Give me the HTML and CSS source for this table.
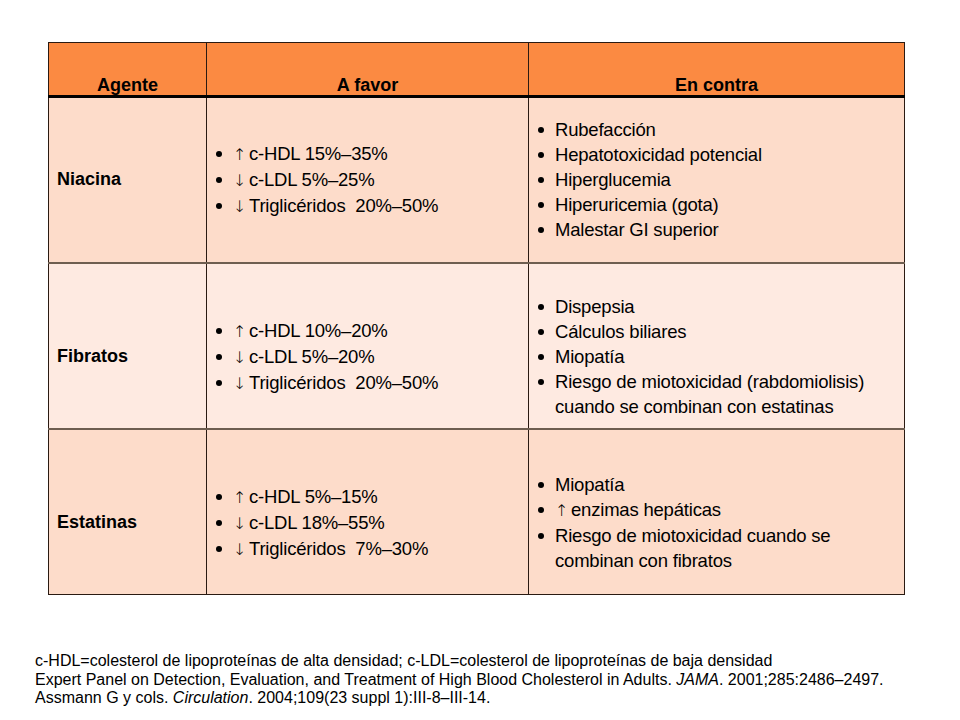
FILE: index.html
```html
<!DOCTYPE html>
<html lang="es">
<head>
<meta charset="utf-8">
<title>Agentes hipolipemiantes</title>
<link rel="stylesheet" href="styles.css">
</head>
<body>
<div class="page">
  <table class="grid">
    <colgroup>
      <col class="c1"><col class="c2"><col class="c3">
    </colgroup>
    <thead>
      <tr>
        <th>Agente</th>
        <th>A favor</th>
        <th>En contra</th>
      </tr>
    </thead>
    <tbody>
      <tr class="row odd first">
        <td class="agent">Niacina</td>
        <td>
          <ul class="list">
            <li><span class="b"></span><span><span class="arr">↑</span>c-HDL 15%–35%</span></li>
            <li><span class="b"></span><span><span class="arr">↓</span>c-LDL 5%–25%</span></li>
            <li><span class="b"></span><span><span class="arr">↓</span>Triglicéridos&nbsp; 20%–50%</span></li>
          </ul>
        </td>
        <td>
          <ul class="list">
            <li><span class="b"></span><span>Rubefacción</span></li>
            <li><span class="b"></span><span>Hepatotoxicidad potencial</span></li>
            <li><span class="b"></span><span>Hiperglucemia</span></li>
            <li><span class="b"></span><span>Hiperuricemia (gota)</span></li>
            <li><span class="b"></span><span>Malestar GI superior</span></li>
          </ul>
        </td>
      </tr>
      <tr class="row even">
        <td class="agent">Fibratos</td>
        <td>
          <ul class="list">
            <li><span class="b"></span><span><span class="arr">↑</span>c-HDL 10%–20%</span></li>
            <li><span class="b"></span><span><span class="arr">↓</span>c-LDL 5%–20%</span></li>
            <li><span class="b"></span><span><span class="arr">↓</span>Triglicéridos&nbsp; 20%–50%</span></li>
          </ul>
        </td>
        <td>
          <ul class="list">
            <li><span class="b"></span><span>Dispepsia</span></li>
            <li><span class="b"></span><span>Cálculos biliares</span></li>
            <li><span class="b"></span><span>Miopatía</span></li>
            <li><span class="b"></span><span>Riesgo de miotoxicidad (rabdomiolisis) cuando se combinan con estatinas</span></li>
          </ul>
        </td>
      </tr>
      <tr class="row odd">
        <td class="agent">Estatinas</td>
        <td>
          <ul class="list">
            <li><span class="b"></span><span><span class="arr">↑</span>c-HDL 5%–15%</span></li>
            <li><span class="b"></span><span><span class="arr">↓</span>c-LDL 18%–55%</span></li>
            <li><span class="b"></span><span><span class="arr">↓</span>Triglicéridos&nbsp; 7%–30%</span></li>
          </ul>
        </td>
        <td>
          <ul class="list">
            <li><span class="b"></span><span>Miopatía</span></li>
            <li><span class="b"></span><span><span class="arr">↑</span>enzimas hepáticas</span></li>
            <li><span class="b"></span><span>Riesgo de miotoxicidad cuando se combinan con fibratos</span></li>
          </ul>
        </td>
      </tr>
    </tbody>
  </table>

  <div class="notes">
    <p>c-HDL=colesterol de lipoproteínas de alta densidad; c-LDL=colesterol de lipoproteínas de baja densidad</p>
    <p>Expert Panel on Detection, Evaluation, and Treatment of High Blood Cholesterol in Adults. <i>JAMA</i>. 2001;285:2486–2497.</p>
    <p>Assmann G y cols. <i>Circulation</i>. 2004;109(23 suppl 1):III-8–III-14.</p>
  </div>
</div>
</body>
</html>
```

FILE: styles.css
```css
html, body {
  margin: 0;
  padding: 0;
  background: #ffffff;
}

body {
  font-family: "Liberation Sans", Arial, sans-serif;
  color: #000000;
}

.page {
  width: 960px;
  height: 720px;
  padding-top: 42px;
  box-sizing: border-box;
}

.grid {
  margin-left: 48px;
  width: 856px;
  border-collapse: collapse;
  table-layout: fixed;
  border: 1px solid #2a1a12;
}

.c1 { width: 158px; }
.c2 { width: 322px; }
.c3 { width: 376px; }

.grid th {
  background: #fb8a42;
  height: 54px;
  padding: 0;
  box-sizing: border-box;
  vertical-align: bottom;
  text-align: center;
  font-size: 18px;
  font-weight: bold;
  line-height: 20px;
  border-left: 1px solid #2a1a12;
  border-right: 1px solid #2a1a12;
  border-bottom: 3px solid #000000;
}

.grid td {
  vertical-align: middle;
  padding: 0;
  border-left: 1px solid #2a1a12;
  border-right: 1px solid #2a1a12;
  border-top: 2px solid #6e5e50;
  font-size: 18.5px;
}

.row.first td {
  border-top: none;
}

.row {
  height: 166px;
}

.row.odd td {
  background: #fddcca;
}

.row.even td {
  background: #feeae1;
}

.row.even td,
.row.first ~ .row.odd td {
  padding-top: 22px;
}

.grid td.agent {
  font-weight: bold;
  font-size: 18px;
  padding-left: 8px;
}

.list {
  list-style: none;
  margin: 0;
  padding: 0 8px 0 6px;
  letter-spacing: -0.2px;
}

.list li {
  display: flex;
  align-items: flex-start;
  line-height: 25px;
}

.list .b {
  flex: 0 0 6px;
  height: 6px;
  margin: 10px 11px 0 3px;
  border-radius: 50%;
  background: #000000;
}

.arr {
  display: inline-block;
  width: 16px;
  font-family: "DejaVu Sans", sans-serif;
  font-size: 16px;
  font-weight: 300;
}

.notes {
  margin-top: 57px;
  padding-left: 35px;
  font-size: 16px;
  line-height: 18.5px;
}

.notes p {
  margin: 0;
}
```
